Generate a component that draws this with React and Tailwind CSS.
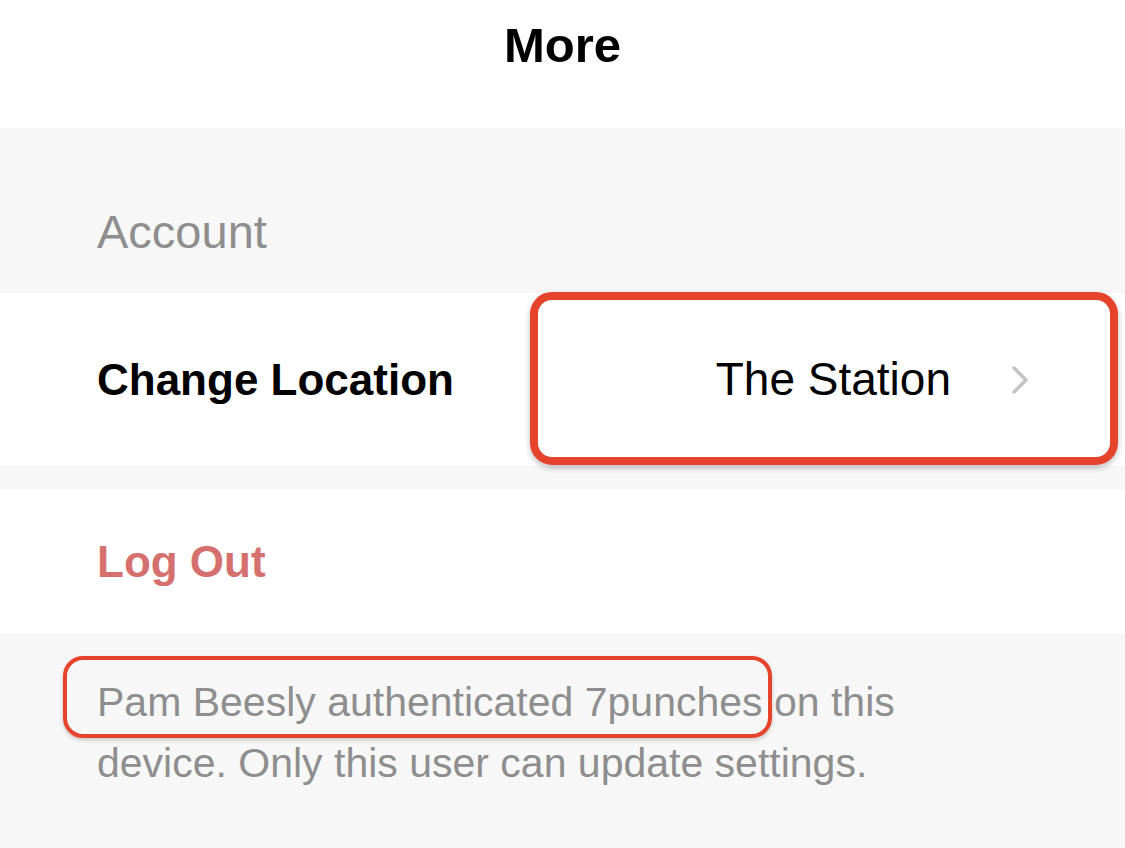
import React from 'react';

const font = { fontFamily: '"Liberation Sans", Arial, sans-serif' };

export default function App() {
    return (
        <div className="relative w-[1125px] h-[848px] bg-[#f7f7f7] overflow-hidden" style={font}>
            <div className="h-[128px] bg-white flex items-start justify-center pt-[16px]">
                <h1 className="text-[49px] font-bold text-black leading-[58px]">More</h1>
            </div>

            <div className="h-[165px] flex items-end px-[97px] pb-[38px]">
                <span className="text-[47px] text-[#8e8e8e] leading-none">Account</span>
            </div>

            <div className="h-[173px] bg-white flex items-center justify-between pl-[97px] pr-[96px]">
                <span className="text-[44px] font-bold text-black">Change Location</span>
                <div className="flex items-center gap-[60px]">
                    <span className="text-[46px] text-black">The Station</span>
                    <svg width="18" height="30" viewBox="0 0 18 30" fill="none">
                        <path d="M3 3l12 12-12 12" stroke="#c4c4c8" strokeWidth="3.5" strokeLinecap="round" strokeLinejoin="round" />
                    </svg>
                </div>
            </div>

            <div className="h-[24px]" />

            <div className="h-[144px] bg-white flex items-center px-[97px]">
                <span className="text-[44px] font-bold text-[#d5706f]">Log Out</span>
            </div>

            <div className="px-[97px] pt-[38px]">
                <p className="text-[41px] leading-[61px] text-[#8e8e8e] w-[840px]">
                    Pam Beesly authenticated 7punches on this device. Only this user can update settings.
                </p>
            </div>

            <div className="absolute left-[530px] top-[292px] w-[588px] h-[173px] rounded-[22px] border-[8px] border-[#e5432b] shadow-[0_3px_6px_rgba(0,0,0,0.25)]" />
            <div className="absolute left-[63px] top-[656px] w-[709px] h-[82px] rounded-[20px] border-[4px] border-[#e5432b] shadow-[0_2px_4px_rgba(0,0,0,0.2)]" />
        </div>
    );
}
